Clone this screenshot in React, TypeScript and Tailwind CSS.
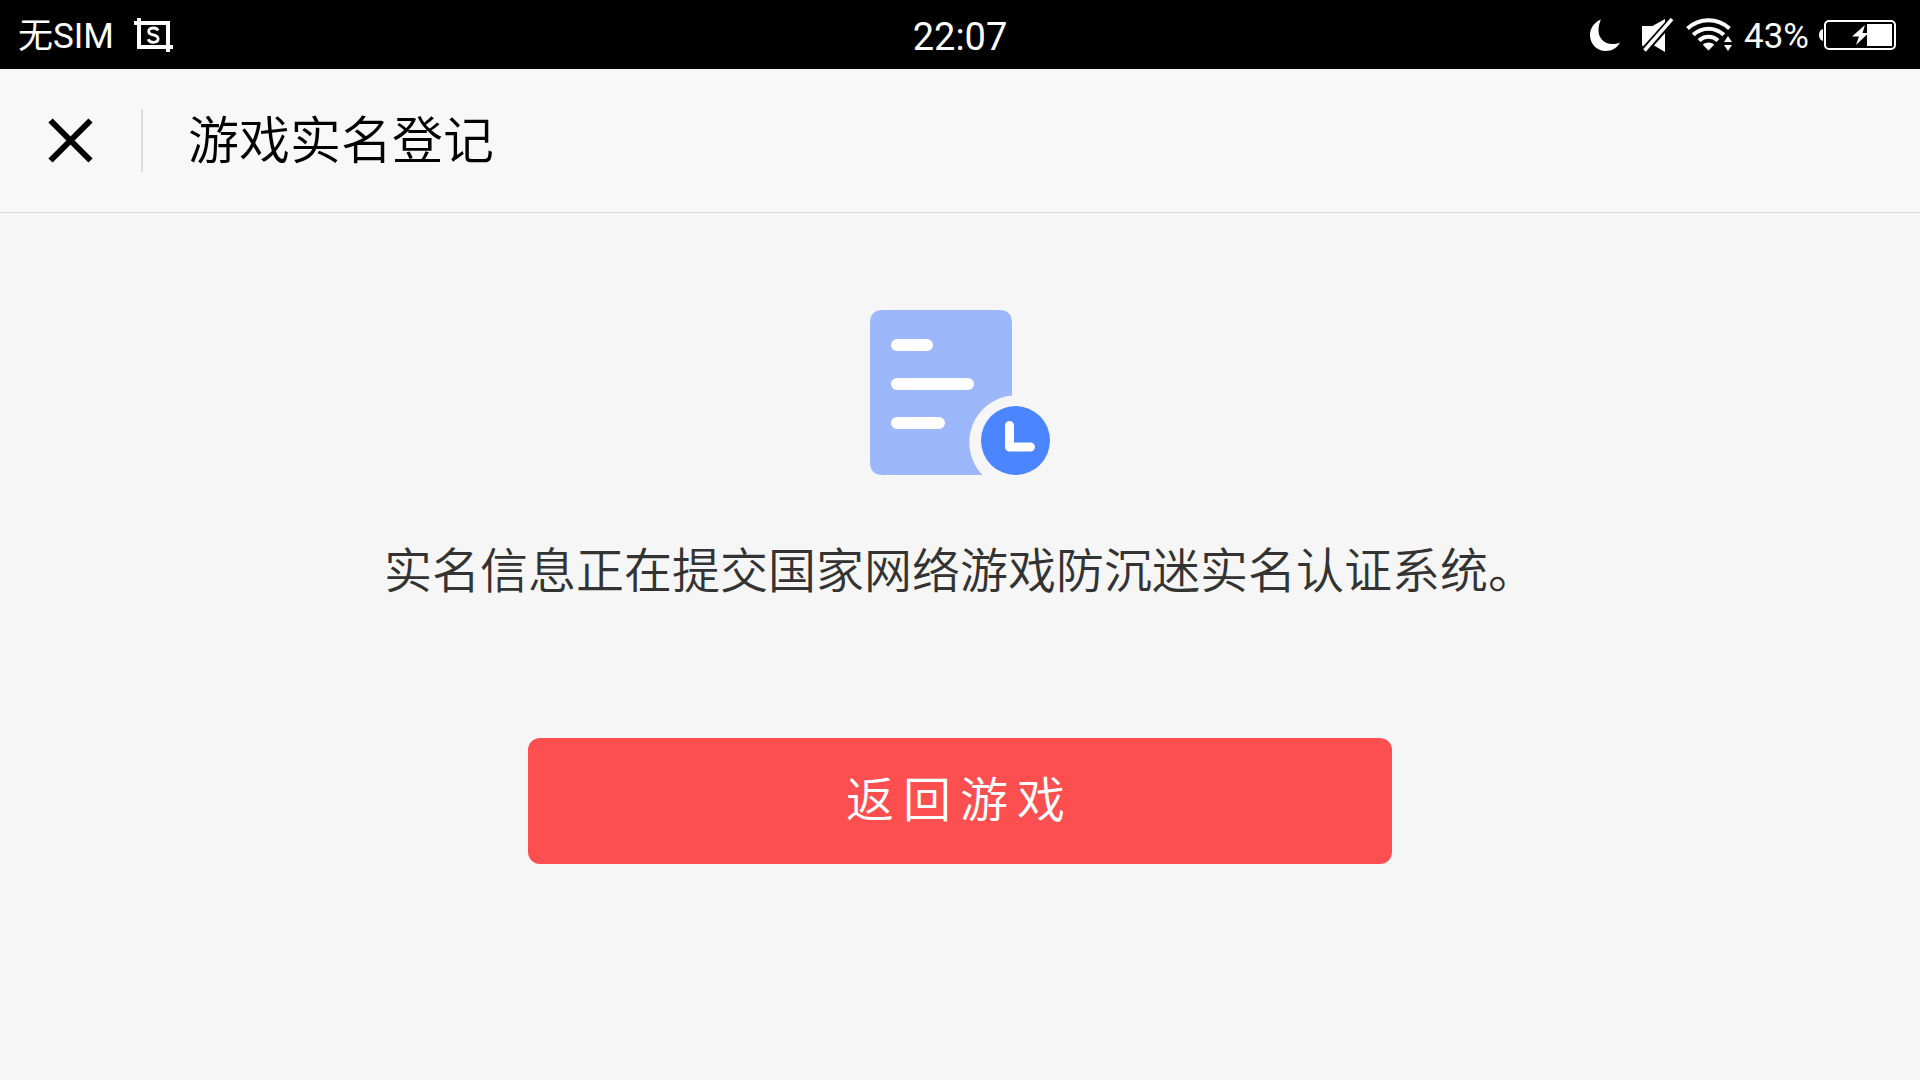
function ScreenshotIcon() {
  return (
    <svg className="h-[34px] w-[39px]" viewBox="0 0 39 34" fill="none" stroke="#fff" strokeWidth="4" aria-hidden="true">
      <path d="M5 0V29H39" />
      <path d="M0 5H34V34" />
      <path d="M24 12.5C23.4 10.8 21.6 10 19.3 10C16.5 10 14.7 11.4 14.7 13.4C14.7 15.6 16.6 16.3 19.2 16.9C22 17.5 24.1 18.3 24.1 20.8C24.1 23 22.1 24.3 19.4 24.3C16.8 24.3 14.9 23.3 14.2 21.2" strokeWidth="2.8" />
    </svg>
  );
}

function MoonIcon() {
  return (
    <svg className="h-8 w-[30px]" viewBox="0 0 30 32" fill="#fff" aria-hidden="true">
      <path d="M11 0.5C4.5 3 0 9 0 16C0 25 7 32 15.5 32C22 32 27.5 28.5 30 23.5C27.5 24.7 25 25 22.5 25C14 25 8.5 19 8.5 11.5C8.5 7.5 9.3 3.5 11 0.5Z" />
    </svg>
  );
}

function MuteIcon() {
  return (
    <svg className="h-[34px] w-8" viewBox="0 0 32 34" fill="#fff" aria-hidden="true">
      <path d="M0 8H10.5L23 1V4L1 28.5L0 27Z" />
      <path d="M23 15V34L12 27.5Z" />
      <path d="M2.5 32.5L30 1" stroke="#fff" strokeWidth="3.5" />
    </svg>
  );
}

function WifiIcon() {
  return (
    <svg className="h-[33px] w-[46px]" viewBox="0 0 46 33" fill="none" stroke="#fff" strokeWidth="4.2" aria-hidden="true">
      <path d="M1.5 10.5C13.5 -0.5 31.5 -0.5 43.5 10.5" />
      <path d="M7.2 16.8C16 8.7 29 8.7 37.8 16.8" />
      <path d="M13 22.5C18.5 17.5 26.5 17.5 32 22.5" />
      <path d="M22.5 32.5L16.8 26.7C20 23.8 25 23.8 28.2 26.7Z" fill="#fff" stroke="none" />
      <path d="M42 18L46 24H38ZM42 33L46 27H38Z" fill="#fff" stroke="none" />
    </svg>
  );
}

function BatteryIcon() {
  return (
    <svg className="h-[30px] w-[77px]" viewBox="0 0 77 30" aria-hidden="true">
      <path d="M4 9V21C1.5 20 0 18.5 0 15C0 11.5 1.5 10 4 9Z" fill="#fff" />
      <rect x="6" y="1" width="70" height="28" rx="4" fill="none" stroke="#fff" strokeWidth="2" />
      <path d="M48 4H73V26H48Z" fill="#fff" />
      <path d="M46 5L33 16.5H40L37 25L49.5 13H43.5Z" fill="#fff" />
    </svg>
  );
}

function PendingDocumentIcon() {
  return (
    <svg className="h-[165px] w-[180px]" viewBox="0 0 180 165" aria-hidden="true">
      <path
        d="M13 0H129Q142 0 142 13V85.5A47 47 0 0 0 112.5 165H13Q0 165 0 152V13Q0 0 13 0Z"
        fill="#9db7fb"
      />
      <g fill="#fff">
        <rect x="21" y="29" width="42" height="12" rx="6" />
        <rect x="21" y="68" width="83" height="12" rx="6" />
        <rect x="21" y="107" width="54" height="12" rx="6" />
      </g>
      <circle cx="145.5" cy="130.5" r="34.5" fill="#4b85ff" />
      <path d="M139.5 115.5V137H160.5" fill="none" stroke="#fff" strokeWidth="9" strokeLinecap="round" strokeLinejoin="round" />
    </svg>
  );
}

function StatusBar() {
  return (
    <div className="grid h-[69px] grid-cols-3 items-center bg-black px-[18px] text-white">
      <div className="flex items-center gap-5">
        <span className="pt-1 text-[35px] leading-none">无SIM</span>
        <ScreenshotIcon />
      </div>
      <time className="pt-1 text-center text-[38px] leading-none">22:07</time>
      <div className="flex items-center justify-end pr-1.5">
        <MoonIcon />
        <span className="w-[22px]" />
        <MuteIcon />
        <span className="w-3" />
        <WifiIcon />
        <span className="ml-3 mr-2.5 pt-1 text-[35px] leading-none">43%</span>
        <BatteryIcon />
      </div>
    </div>
  );
}

export default function App() {
  return (
    <div className="flex min-h-screen flex-col bg-[#f6f6f6] font-[Roboto,'Noto_Sans_CJK_SC',sans-serif]">
      <StatusBar />
      <header className="flex h-36 items-center border-b border-[#dcdcdc] bg-[#f8f8f8] pl-12">
        <button type="button" aria-label="关闭">
          <svg className="h-[45px] w-[45px]" viewBox="0 0 45 45" stroke="#000" strokeWidth="6" aria-hidden="true">
            <path d="M2.5 2.5L42.5 42.5M42.5 2.5L2.5 42.5" />
          </svg>
        </button>
        <span className="ml-12 h-[63px] w-0.5 bg-[#dcdcdc]" />
        <h1 className="ml-[45px] pb-1.5 font-['Noto_Sans_CJK_SC',sans-serif] text-[51px] font-[350] leading-none text-black">
          游戏实名登记
        </h1>
      </header>
      <main className="flex flex-col items-center pt-[97px] font-['Noto_Sans_CJK_SC',sans-serif]">
        <PendingDocumentIcon />
        <p className="mt-14 text-[48px] font-[350] leading-[72px] text-[#333]">
          实名信息正在提交国家网络游戏防沉迷实名认证系统。
        </p>
        <button
          type="button"
          className="mt-[135px] h-[126px] w-[45%] rounded-xl bg-[#fd4f4f] pb-2.5 text-[48px] font-[350] leading-none tracking-[9px] text-white"
        >
          返回游戏
        </button>
      </main>
    </div>
  );
}
